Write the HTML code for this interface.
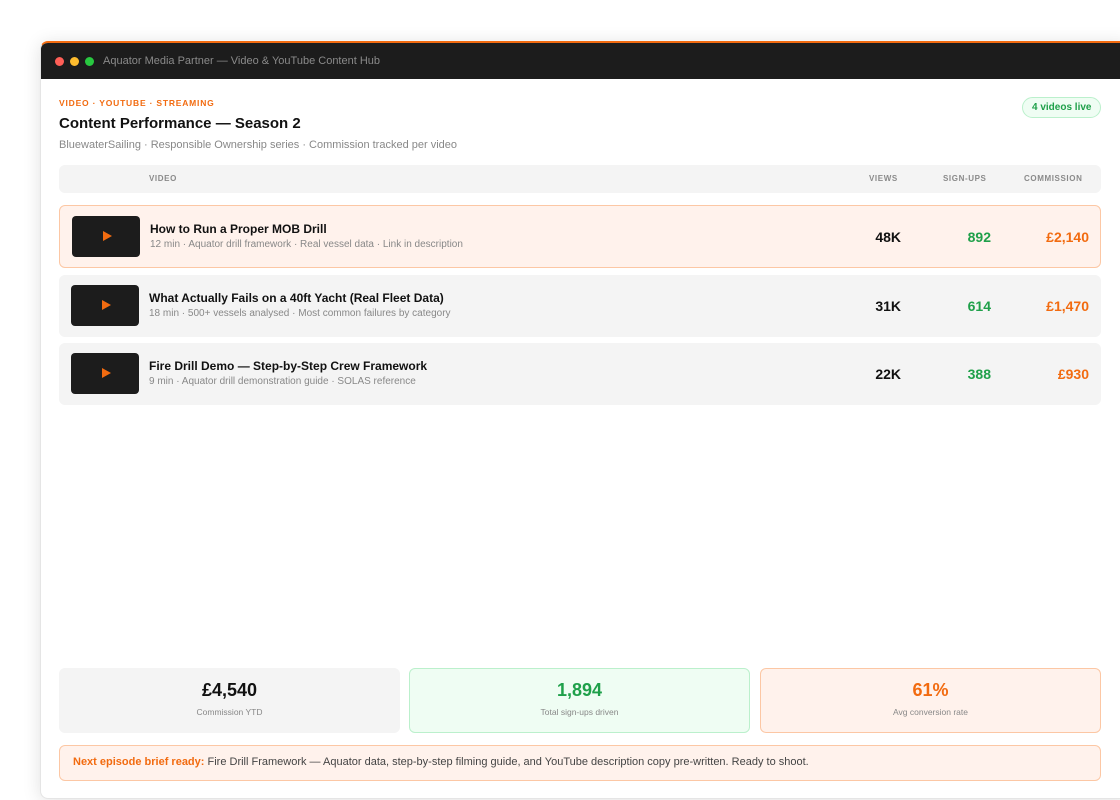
<!DOCTYPE html>
<html><head><meta charset="utf-8"><style>
*{box-sizing:border-box;margin:0;padding:0}
body{width:1120px;height:800px;background:#fff;font-family:"Liberation Sans",sans-serif;position:relative;overflow:hidden}
.win{position:absolute;left:40px;top:41px;width:1090px;height:758px;border-top:2px solid #f26b10;border-radius:8px 0 0 8px;box-shadow:0 2px 18px rgba(0,0,0,.12);border-left:1px solid #e5e5e5;border-bottom:1px solid #e5e5e5;background:#fff;overflow:hidden}
.bar{height:36px;background:#1c1c1c;position:relative}
.dot{position:absolute;top:14px;width:9px;height:9px;border-radius:50%}
.bar span.t{position:absolute;left:62px;top:12px;font-size:11px;color:#8a8a8a}
.a{position:absolute}
.hdr{left:18px;top:122px;width:1042px;height:28px;background:#f4f4f4;border-radius:6px}
.hl{font-size:8px;font-weight:bold;color:#8a8a8a;letter-spacing:.6px;position:absolute;top:9px}
.row{left:18px;width:1042px;border-radius:6px;background:#f4f4f4}
.thumb{position:absolute;left:12px;width:68px;height:41px;background:#1c1c1c;border-radius:4px}
.thumb:after{content:"";position:absolute;left:31px;top:15px;border-left:9px solid #f26b10;border-top:5.5px solid transparent;border-bottom:5.5px solid transparent}
.ti{position:absolute;left:90px;font-size:12px;font-weight:bold;color:#111}
.su{position:absolute;left:90px;font-size:10px;color:#888}
.n{position:absolute;font-size:14px;font-weight:bold;text-align:right}
.stat{position:absolute;top:625px;width:341px;height:65px;border-radius:6px;text-align:center}
.stat b{display:block;font-size:18px;margin-top:12px}
.stat i{display:block;font-style:normal;font-size:8.5px;color:#888;margin-top:6px}
</style></head><body>
<div class="win">
<div class="bar">
<div class="dot" style="left:14px;background:#ff5f57"></div>
<div class="dot" style="left:29px;background:#febc2e"></div>
<div class="dot" style="left:44px;background:#28c840"></div>
<span class="t">Aquator Media Partner — Video &amp; YouTube Content Hub</span>
</div>
<div class="a" style="left:18px;top:55px;font-size:8.5px;font-weight:bold;color:#f26b10;letter-spacing:.8px">VIDEO · YOUTUBE · STREAMING</div>
<div class="a" style="left:18px;top:72px;font-size:15px;font-weight:bold;color:#111">Content Performance — Season 2</div>
<div class="a" style="left:18px;top:96px;font-size:11px;color:#888">BluewaterSailing · Responsible Ownership series · Commission tracked per video</div>
<div class="a" style="left:981px;top:54px;height:21px;padding:0 9px;line-height:19px;border:1px solid #bbf0cc;background:#effdf3;border-radius:11px;color:#1fa04a;font-size:10px;font-weight:bold">4 videos live</div>
<div class="a hdr"><span class="hl" style="left:90px">VIDEO</span><span class="hl" style="left:810px">VIEWS</span><span class="hl" style="left:884px">SIGN-UPS</span><span class="hl" style="left:965px">COMMISSION</span></div>

<div class="a row" style="top:162px;height:63px;background:#fff2ec;border:1px solid #fcc7a4">
<div class="thumb" style="top:10px;left:12px"></div>
<div class="ti" style="top:16px;left:90px">How to Run a Proper MOB Drill</div>
<div class="su" style="top:33px;left:90px">12 min · Aquator drill framework · Real vessel data · Link in description</div>
<div class="n" style="right:199px;top:23px;color:#111">48K</div>
<div class="n" style="right:109px;top:23px;color:#1fa04a">892</div>
<div class="n" style="right:11px;top:23px;color:#f26b10">£2,140</div>
</div>
<div class="a row" style="top:232px;height:62px">
<div class="thumb" style="top:10px"></div>
<div class="ti" style="top:16px">What Actually Fails on a 40ft Yacht (Real Fleet Data)</div>
<div class="su" style="top:33px">18 min · 500+ vessels analysed · Most common failures by category</div>
<div class="n" style="right:200px;top:23px;color:#111">31K</div>
<div class="n" style="right:110px;top:23px;color:#1fa04a">614</div>
<div class="n" style="right:12px;top:23px;color:#f26b10">£1,470</div>
</div>
<div class="a row" style="top:300px;height:62px">
<div class="thumb" style="top:10px"></div>
<div class="ti" style="top:16px">Fire Drill Demo — Step-by-Step Crew Framework</div>
<div class="su" style="top:33px">9 min · Aquator drill demonstration guide · SOLAS reference</div>
<div class="n" style="right:200px;top:23px;color:#111">22K</div>
<div class="n" style="right:110px;top:23px;color:#1fa04a">388</div>
<div class="n" style="right:12px;top:23px;color:#f26b10">£930</div>
</div>

<div class="stat" style="left:18px;background:#f4f4f4"><b style="color:#111">£4,540</b><i>Commission YTD</i></div>
<div class="stat" style="left:368px;background:#effdf3;border:1px solid #bbf0cc"><b style="color:#1fa04a;margin-top:11px">1,894</b><i>Total sign-ups driven</i></div>
<div class="stat" style="left:719px;background:#fff2ec;border:1px solid #fcc7a4"><b style="color:#f26b10;margin-top:11px">61%</b><i>Avg conversion rate</i></div>
<div class="a" style="left:18px;top:702px;width:1042px;height:36px;background:#fff2ec;border:1px solid #fcc7a4;border-radius:6px;padding:10px 13px;font-size:11px;color:#444"><b style="color:#f26b10">Next episode brief ready:</b> Fire Drill Framework — Aquator data, step-by-step filming guide, and YouTube description copy pre-written. Ready to shoot.</div>
</div>
</body></html>
